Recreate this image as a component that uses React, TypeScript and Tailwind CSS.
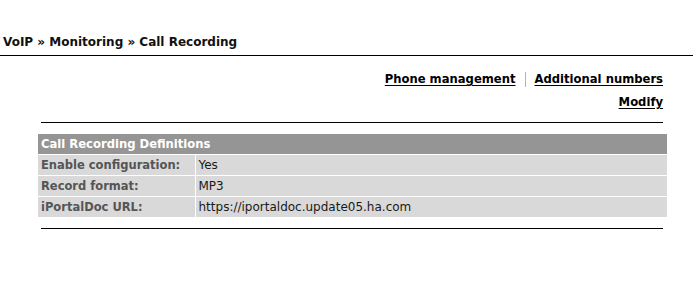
import React from "react";

export default function App() {
  const rows = [
    ["Enable configuration:", "Yes"],
    ["Record format:", "MP3"],
    ["iPortalDoc URL:", "https://iportaldoc.update05.ha.com"],
  ];
  return (
    <div className="w-full min-h-[291px] bg-white text-black" style={{ fontFamily: '"DejaVu Sans", Verdana, sans-serif' }}>
      <div className="pt-[33px] pl-[3px] pb-[4px] border-b border-black text-[12px] font-bold leading-[18px] text-[#111]">
        VoIP » Monitoring » Call Recording
      </div>
      <div className="pr-[30px] pl-[38px]">
        <div className="flex justify-end items-center pt-[15px] text-[11.6px] font-bold leading-[16px]">
          <a href="#" className="underline underline-offset-[2px] text-black">Phone management</a>
          <span className="mx-[9px] w-px h-[15px] bg-[#a9b4d0]" />
          <a href="#" className="underline underline-offset-[2px] text-black">Additional numbers</a>
        </div>
        <div className="flex justify-end pt-[7px] text-[11.6px] font-bold leading-[16px]">
          <a href="#" className="underline underline-offset-[2px] text-black">Modify</a>
        </div>
        <div className="mt-[12px] ml-[3px] border-t border-black" />
        <table className="mt-[11px] w-[629px] border-collapse text-[12px] leading-[20px]">
          <thead>
            <tr>
              <th colSpan={2} className="bg-[#959595] text-white font-bold text-left text-[11.6px] pl-[3px] h-[20px] border-b border-white">
                Call Recording Definitions
              </th>
            </tr>
          </thead>
          <tbody>
            {rows.map(([k, v], i) => (
              <tr key={k} className={i < rows.length - 1 ? "border-b border-white" : ""}>
                <td className="bg-[#d9d9d9] font-bold text-[11.5px] text-[#555] pl-[3px] w-[157px] h-[20px] border-r border-white">{k}</td>
                <td className="bg-[#d9d9d9] text-[#1a1a1a] pl-[3px] h-[20px]">{v}</td>
              </tr>
            ))}
          </tbody>
        </table>
        <div className="mt-[11px] ml-[3px] border-t border-black" />
      </div>
    </div>
  );
}
